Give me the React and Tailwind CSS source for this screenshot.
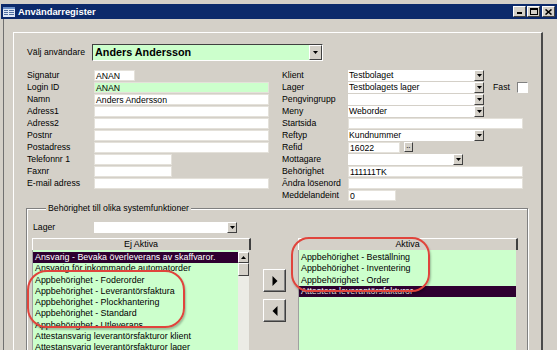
import React from "react";

const leftFields = [
  { label: "Signatur", value: "ANAN", w: "w-[41px]" },
  { label: "Login ID", value: "ANAN", w: "w-[175px]", green: true },
  { label: "Namn", value: "Anders Andersson", w: "w-[175px]" },
  { label: "Adress1", w: "w-[175px]" },
  { label: "Adress2", w: "w-[175px]" },
  { label: "Postnr", w: "w-[175px]" },
  { label: "Postadress", w: "w-[175px]" },
  { label: "Telefonnr 1", w: "w-[78px]" },
  { label: "Faxnr", w: "w-[78px]" },
  { label: "E-mail adress", w: "w-[175px]" },
];

const ejAktiva = [
  "Ansvarig - Bevaka överleverans av skaffvaror.",
  "Ansvarig för inkommande automatorder",
  "Appbehörighet - Foderorder",
  "Appbehörighet - Leverantörsfaktura",
  "Appbehörighet - Plockhantering",
  "Appbehörighet - Standard",
  "Appbehörighet - Utleverans",
  "Attestansvarig leverantörsfakturor klient",
  "Attestansvarig leverantörsfakturor lager",
];

const aktiva = [
  "Appbehörighet - Beställning",
  "Appbehörighet - Inventering",
  "Appbehörighet - Order",
  "Attestera leverantörsfakturor",
];

function DropBtn({ className = "w-[10px]" }) {
  return (
    <div className={`${className} h-full shrink-0 bg-[#d4d0c8] border-t border-l border-t-white border-l-white border-b border-r border-b-[#404040] border-r-[#404040] flex items-center justify-center`}>
      <svg width="5" height="3" viewBox="0 0 5 3">
        <path d="M0 0h5L2.5 3z" fill="#000" />
      </svg>
    </div>
  );
}

function Field({ w, value, green }) {
  return (
    <div className={`${w} h-[11px] ${green ? "bg-[#ccffcc]" : "bg-white"} border border-[#e4e1da] pl-[1px] leading-[10px] whitespace-nowrap overflow-hidden`}>
      {value}
    </div>
  );
}

function Combo({ w, value }) {
  return (
    <div className={`${w} h-[11px] flex bg-white`}>
      <div className="flex-1 pl-[1px] leading-[11px] whitespace-nowrap overflow-hidden">{value}</div>
      <DropBtn />
    </div>
  );
}

function Label({ w, children }) {
  return <div className={`${w} shrink-0 leading-[11px] whitespace-nowrap`}>{children}</div>;
}

function ArrowBtn({ dir }) {
  return (
    <div className="w-[23px] h-[23px] bg-[#d4d0c8] border-t border-l border-t-white border-l-white border-b border-r border-b-[#404040] border-r-[#404040] shadow-[inset_-1px_-1px_0_#808080] flex items-center justify-center">
      <svg width="6" height="10" viewBox="0 0 6 10">
        {dir === "right" ? <path d="M0.5 0L5.5 5L0.5 10z" fill="#000" /> : <path d="M5.5 0L0.5 5L5.5 10z" fill="#000" />}
      </svg>
    </div>
  );
}

function ListRow({ text, selected }) {
  return (
    <div className={`h-[11.25px] leading-[11.25px] pl-[2px] whitespace-nowrap overflow-hidden ${selected ? "bg-[#2e0030] text-white" : "text-black"}`}>
      {text}
    </div>
  );
}

function ListHeader({ children }) {
  return (
    <div className="h-[12px] bg-[#d4d0c8] border-t border-l border-t-white border-l-white border-r-2 border-r-[#404040] flex items-center justify-center leading-[11px]">
      {children}
    </div>
  );
}

export default function App() {
  return (
    <div className="relative w-[557px] h-[350px] overflow-hidden bg-[#d4d0c8] text-black text-[8.7px] font-['Liberation_Sans',Arial,sans-serif]">
      {/* Title bar */}
      <div className="pt-[4px] pl-[1px]">
        <div className="h-[15px] bg-[#0c2a6b] flex items-center pl-[2px] pr-[2px]">
          <svg width="12" height="10" viewBox="0 0 12 10" className="shrink-0">
            <rect x="0" y="0" width="12" height="10" fill="#dfe8f5" />
            <rect x="0" y="0" width="12" height="2" fill="#6a8fc8" />
            <rect x="1" y="3" width="4" height="1" fill="#506fa0" />
            <rect x="6" y="3" width="5" height="1" fill="#506fa0" />
            <rect x="1" y="5" width="4" height="1" fill="#506fa0" />
            <rect x="6" y="5" width="5" height="1" fill="#506fa0" />
            <rect x="1" y="7" width="4" height="1" fill="#506fa0" />
            <rect x="6" y="7" width="5" height="1" fill="#506fa0" />
          </svg>
          <span className="ml-[3px] text-white font-bold text-[9.4px] leading-[15px]">Användarregister</span>
          <div className="ml-auto flex items-center">
            <div className="w-[13px] h-[11px] bg-[#d4d0c8] border-t border-l border-t-white border-l-white border-b border-r border-b-[#404040] border-r-[#404040] flex items-end justify-center pb-[2px]">
              <div className="w-[5px] h-[2px] bg-black" />
            </div>
            <div className="w-[13px] h-[11px] ml-[1px] bg-[#d4d0c8] border-t border-l border-t-white border-l-white border-b border-r border-b-[#404040] border-r-[#404040] flex items-center justify-center">
              <div className="w-[8px] h-[7px] border border-black border-t-2" />
            </div>
            <div className="w-[13px] h-[11px] ml-[2px] bg-[#d4d0c8] border-t border-l border-t-white border-l-white border-b border-r border-b-[#404040] border-r-[#404040] flex items-center justify-center">
              <svg width="7" height="6" viewBox="0 0 7 6">
                <path d="M0.5 0.5L6.5 5.5M6.5 0.5L0.5 5.5" stroke="#000" strokeWidth="1.6" />
              </svg>
            </div>
          </div>
        </div>
      </div>

      {/* Window body */}
      <div className="ml-[3px] border-l border-l-[#707070] pt-[13px] pl-[9px] h-[331px]">
        <div className="w-[530px] h-[318px] border-t border-l border-t-white border-l-white border-r-2 border-r-[#4a4a4a]">
          {/* Välj användare */}
          <div className="mt-[11px] ml-[13px] flex items-center h-[17px]">
            <Label w="w-[65px]">Välj användare</Label>
            <div className="w-[231px] h-[17px] flex bg-[#ccffcc] border-t border-l border-t-[#404040] border-l-[#404040] border-b border-r border-b-white border-r-white">
              <div className="flex-1 pl-[2px] font-bold text-[10.8px] leading-[15px] whitespace-nowrap">Anders Andersson</div>
              <DropBtn className="w-[13px]" />
            </div>
          </div>

          {/* Fields */}
          <div className="mt-[9px] flex">
            <div className="w-[268px] pl-[13px]">
              {leftFields.map((f) => (
                <div key={f.label} className="h-[12px] flex items-start">
                  <Label w="w-[67px]">{f.label}</Label>
                  <Field w={f.w} value={f.value} green={f.green} />
                </div>
              ))}
            </div>
            <div className="flex-1">
              <div className="h-[12px] flex items-start">
                <Label w="w-[66px]">Klient</Label>
                <Combo w="w-[136px]" value="Testbolaget" />
              </div>
              <div className="h-[12px] flex items-start">
                <Label w="w-[66px]">Lager</Label>
                <Combo w="w-[136px]" value="Testbolagets lager" />
                <span className="ml-[9px] leading-[11px]">Fast</span>
                <div className="ml-[7px] w-[11px] h-[11px] bg-white border-t border-l border-t-[#808080] border-l-[#808080] border-b border-r border-b-white border-r-white" />
              </div>
              <div className="h-[12px] flex items-start">
                <Label w="w-[66px]">Pengvingrupp</Label>
                <Combo w="w-[136px]" value="" />
              </div>
              <div className="h-[12px] flex items-start">
                <Label w="w-[66px]">Meny</Label>
                <Combo w="w-[136px]" value="Weborder" />
              </div>
              <div className="h-[12px] flex items-start">
                <Label w="w-[66px]">Startsida</Label>
                <Field w="w-[175px]" />
              </div>
              <div className="h-[12px] flex items-start">
                <Label w="w-[66px]">Reftyp</Label>
                <Combo w="w-[136px]" value="Kundnummer" />
              </div>
              <div className="h-[12px] flex items-start">
                <Label w="w-[66px]">Refid</Label>
                <Field w="w-[52px]" value="16022" />
                <div className="ml-[4px] w-[9px] h-[10px] bg-[#d4d0c8] border-t border-l border-t-white border-l-white border-b border-r border-b-[#404040] border-r-[#404040] flex items-center justify-center text-[6px] leading-[6px] font-bold">
                  ··
                </div>
              </div>
              <div className="h-[12px] flex items-start">
                <Label w="w-[66px]">Mottagare</Label>
                <Combo w="w-[115px]" value="" />
              </div>
              <div className="h-[12px] flex items-start">
                <Label w="w-[66px]">Behörighet</Label>
                <Field w="w-[175px]" value="111111TK" />
              </div>
              <div className="h-[12px] flex items-start">
                <Label w="w-[66px]">Ändra lösenord</Label>
                <Field w="w-[175px]" />
              </div>
              <div className="h-[12px] flex items-start">
                <Label w="w-[66px]">Meddelandeint</Label>
                <Field w="w-[48px]" value="0" />
              </div>
            </div>
          </div>

          {/* Behörighet group */}
          <div className="relative mt-[6px] ml-[12px] w-[502px] h-[150px] border border-[#808080] shadow-[inset_1px_1px_0_#fff,1px_1px_0_#fff] pt-[13px]">
            <span className="absolute -top-[6px] left-[19px] px-[2px] bg-[#d4d0c8] leading-[11px]">
              Behörighet till olika systemfunktioner
            </span>
            <div className="pl-[6px] flex items-start h-[11px]">
              <Label w="w-[61px]">Lager</Label>
              <Combo w="w-[143px]" value="" />
            </div>

            <div className="mt-[5px] pl-[5px] flex items-start text-[8.9px]">
              {/* Ej Aktiva */}
              <div className="w-[219px]">
                <ListHeader>Ej Aktiva</ListHeader>
                <div className="flex h-[110px] border-l border-l-[#a0a0a0]">
                  <div className="w-[205px] bg-[#ccffcc] pt-[2px]">
                    {ejAktiva.map((t, i) => (
                      <ListRow key={t} text={t} selected={i === 0} />
                    ))}
                  </div>
                  <div className="w-[11px] bg-[#ecece6] pt-[2px]">
                    <div className="h-[11px] bg-[#d4d0c8] border-t border-l border-t-white border-l-white border-b border-r border-b-[#404040] border-r-[#404040] flex items-center justify-center">
                      <svg width="5" height="3" viewBox="0 0 5 3">
                        <path d="M0 3h5L2.5 0z" fill="#000" />
                      </svg>
                    </div>
                    <div className="h-[13px] bg-[#d4d0c8] border-t border-l border-t-white border-l-white border-b border-r border-b-[#404040] border-r-[#404040]" />
                  </div>
                </div>
              </div>

              {/* Move buttons */}
              <div className="ml-[12px] w-[23px] mt-[31px] flex flex-col gap-[7px]">
                <ArrowBtn dir="right" />
                <ArrowBtn dir="left" />
              </div>

              {/* Aktiva */}
              <div className="ml-[12px] w-[220px]">
                <ListHeader>Aktiva</ListHeader>
                <div className="w-[218px] h-[110px] bg-[#ccffcc] pt-[2px] border-l border-l-[#a0a0a0]">
                  {aktiva.map((t, i) => (
                    <ListRow key={t} text={t} selected={i === 3} />
                  ))}
                </div>
              </div>
            </div>
          </div>
        </div>
      </div>

      {/* Red annotation marks */}
      <div className="absolute left-[27px] top-[270px] w-[158px] h-[58px] rounded-[20px] border-2 border-[#e0443c] shadow-[1px_2px_2px_rgba(0,0,0,0.25)]" />
      <div className="absolute left-[291px] top-[237px] w-[139px] h-[55px] rounded-[18px] border-2 border-[#e0443c] shadow-[1px_2px_2px_rgba(0,0,0,0.25)]" />
    </div>
  );
}
